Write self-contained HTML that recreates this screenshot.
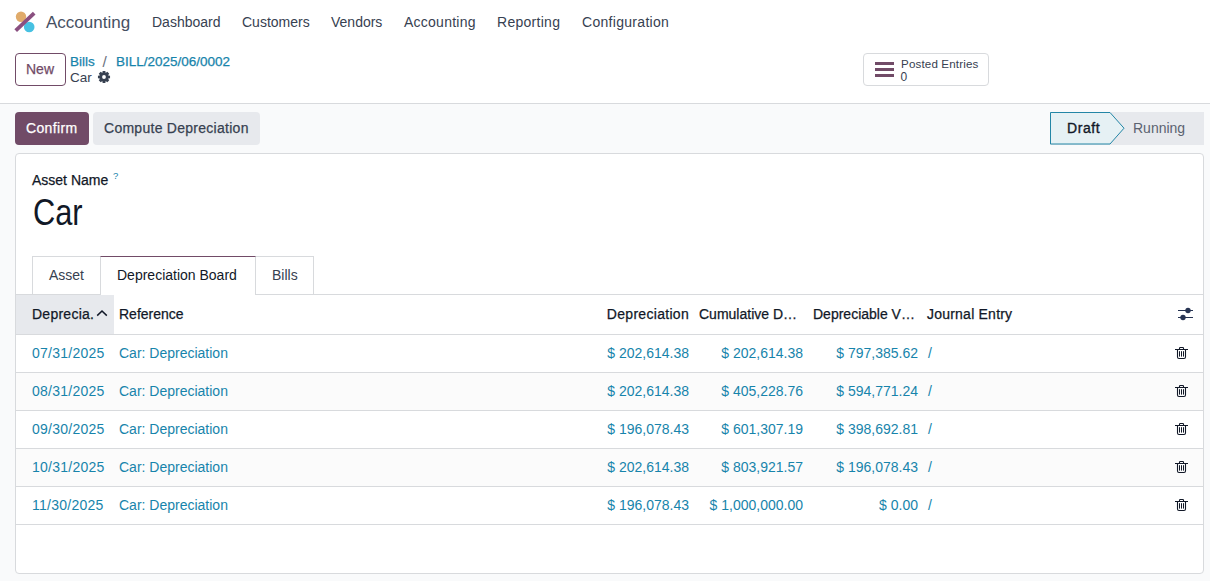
<!DOCTYPE html>
<html><head><meta charset="utf-8">
<style>
*{box-sizing:border-box;margin:0;padding:0}
html,body{width:1210px;height:581px;overflow:hidden;background:#fff;font-family:"Liberation Sans",sans-serif;color:#374151;font-size:14px}
.a{position:absolute;white-space:nowrap;line-height:1}
.r{text-align:right}
.lnk{color:#1784ab}
.md{-webkit-text-stroke:0.25px currentColor}
.dk{color:#111827}
#cp{position:absolute;left:0;top:0;width:1210px;height:104px;background:#fff;border-bottom:1px solid #d8dadd}
#bg{position:absolute;left:0;top:104px;width:1210px;height:477px;background:#f9fafb}
.bx{position:absolute}
.btn{position:absolute;border-radius:4px}
#sheet{position:absolute;left:15px;top:153px;width:1189px;height:421px;background:#fff;border:1px solid #d8dadd;border-radius:4px}
.tab{position:absolute;top:256px;height:39px;border:1px solid #d8dadd;border-bottom:none;background:#fff}
.hl{position:absolute;height:1px;background:#d8dadd}
.row{position:absolute;left:16px;width:1187px;height:38px;border-bottom:1px solid #d8dadd}
.odd{background:#fbfbfb}
</style></head><body>
<div id="cp"></div>
<div id="bg"></div>

<!-- navbar -->
<svg class="a" style="left:13px;top:10px" width="24" height="24" viewBox="0 0 24 24">
  <circle cx="8" cy="6.8" r="5.2" fill="#e0ab6b"/>
  <circle cx="16.2" cy="17" r="5.3" fill="#47c1e2"/>
  <line x1="2.7" y1="20.7" x2="21.2" y2="3.1" stroke="#8a4f80" stroke-width="3.8"/>
</svg>
<div class="a m" style="left:46px;top:14px;font-size:17px;color:#465063">Accounting</div>
<div class="a m" style="left:152px;top:15px">Dashboard</div>
<div class="a m" style="left:242px;top:15px">Customers</div>
<div class="a m" style="left:331px;top:15px">Vendors</div>
<div class="a m" style="left:404px;top:15px;letter-spacing:0.25px">Accounting</div>
<div class="a m" style="left:497px;top:15px;letter-spacing:0.28px">Reporting</div>
<div class="a m" style="left:582px;top:15px;letter-spacing:0.3px">Configuration</div>

<!-- control panel -->
<div class="btn" style="left:15px;top:53px;width:51px;height:33px;border:1px solid #714b67"></div>
<div class="a m md" style="left:26px;top:62px;color:#714b67">New</div>
<div class="a m lnk md" style="left:70px;top:55px;font-size:13.5px">Bills</div>
<div class="a m" style="left:102.5px;top:54px;color:#6b7280;font-size:15.5px">/</div>
<div class="a m lnk md" style="left:116px;top:55px;font-size:13.5px">BILL/2025/06/0002</div>
<div class="a m" style="left:70px;top:71px;font-size:13.5px">Car</div>
<svg class="a" style="left:97px;top:70px" width="14" height="14" viewBox="-7 -7 14 14">
  <path fill="#374151" fill-rule="evenodd" d="M4.32,-1.58 L6.05,-1.35 L6.05,1.35 L4.32,1.58 L4.17,1.94 L5.24,3.32 L3.32,5.24 L1.94,4.17 L1.58,4.32 L1.35,6.05 L-1.35,6.05 L-1.58,4.32 L-1.94,4.17 L-3.32,5.24 L-5.24,3.32 L-4.17,1.94 L-4.32,1.58 L-6.05,1.35 L-6.05,-1.35 L-4.32,-1.58 L-4.17,-1.94 L-5.24,-3.32 L-3.32,-5.24 L-1.94,-4.17 L-1.58,-4.32 L-1.35,-6.05 L1.35,-6.05 L1.58,-4.32 L1.94,-4.17 L3.32,-5.24 L5.24,-3.32 L4.17,-1.94Z M1.9,0 A1.9,1.9 0 1 0 -1.9,0 A1.9,1.9 0 1 0 1.9,0Z"/>
</svg>

<!-- posted entries -->
<div class="btn" style="left:863px;top:53px;width:126px;height:33px;border:1px solid #d8dadd"></div>
<div class="bx" style="left:875px;top:62px;width:19px;height:3px;background:#714b67"></div>
<div class="bx" style="left:875px;top:68px;width:19px;height:3px;background:#714b67"></div>
<div class="bx" style="left:875px;top:74px;width:19px;height:3px;background:#714b67"></div>
<div class="a m" style="left:901px;top:58px;font-size:11.6px;letter-spacing:0.15px">Posted Entries</div>
<div class="a m" style="left:900.5px;top:71px;font-size:12px;color:#374151">0</div>

<!-- action buttons -->
<div class="btn" style="left:15px;top:112px;width:74px;height:33px;background:#714b67"></div>
<div class="a m md" style="left:26px;top:121px;color:#fff;letter-spacing:0.35px">Confirm</div>
<div class="btn" style="left:93px;top:112px;width:167px;height:33px;background:#e7e9ed"></div>
<div class="a m md" style="left:104px;top:121px;letter-spacing:0.27px">Compute Depreciation</div>

<!-- status bar -->
<div class="bx" style="left:1050px;top:112px;width:154px;height:33px;background:#e7e9ed"></div>
<svg class="a" style="left:1049px;top:112px" width="80" height="33" viewBox="0 0 80 33">
  <path d="M1.5,0.5 L61,0.5 L75,16.2 L61,32 L1.5,32 Z" fill="#e6f1f4" stroke="#2386a6" stroke-width="1"/>
</svg>
<div class="a m dk" style="left:1067px;top:121px;-webkit-text-stroke:0.35px #111827;letter-spacing:0.6px">Draft</div>
<div class="a m" style="left:1133px;top:121px;color:#5b6270">Running</div>

<!-- sheet -->
<div id="sheet"></div>
<div class="a m md dk" style="left:32px;top:173px">Asset Name</div>
<div class="a lnk" style="left:113px;top:171px;font-size:9.5px">?</div>
<div class="a m dk" style="left:33px;top:195px;font-size:36px;transform:scaleX(0.855);transform-origin:0 0">Car</div>

<!-- tabs -->
<div class="hl" style="left:16px;top:294px;width:1187px"></div>
<div class="tab" style="left:32px;width:69px;height:38px"></div>
<div class="tab" style="left:255px;width:59px;height:38px"></div>
<div class="tab" style="left:100px;width:156px;border-top:1px solid #714b67;height:40px"></div>
<div class="a m" style="left:49px;top:268px">Asset</div>
<div class="a m dk" style="left:117px;top:268px">Depreciation Board</div>
<div class="a m" style="left:272px;top:268px">Bills</div>

<!-- table header -->
<div class="bx" style="left:16px;top:295px;width:1187px;height:40px;border-bottom:1px solid #d8dadd;background:#fff"></div>
<div class="bx" style="left:16px;top:295px;width:98px;height:39px;background:#e7e9ed"></div>
<div class="a m md dk" style="left:32px;top:307px;letter-spacing:0.25px">Deprecia.</div>
<svg class="a" style="left:96px;top:308px" width="12" height="10" viewBox="0 0 12 10"><path d="M1.2,7.6 L6,3 L10.8,7.6" fill="none" stroke="#111827" stroke-width="1.5"/></svg>
<div class="a m md dk" style="left:119px;top:307px">Reference</div>
<div class="a m md dk r" style="left:589px;width:100px;top:307px;letter-spacing:0.3px">Depreciation</div>
<div class="a m md dk" style="left:699px;top:307px">Cumulative D…</div>
<div class="a m md dk" style="left:813px;top:307px">Depreciable V…</div>
<div class="a m md dk" style="left:927px;top:307px;letter-spacing:0.22px">Journal Entry</div>
<svg class="a" style="left:1176px;top:306px" width="18" height="16" viewBox="0 0 18 16">
  <path d="M2,4.5 H17 M2,11.5 H17" stroke="#263352" stroke-width="1.1"/>
  <circle cx="12" cy="4.5" r="2.7" fill="#263352"/><circle cx="7" cy="11.5" r="2.7" fill="#263352"/>
</svg>

<!-- rows -->
<div class="row" style="top:335px"></div>
<div class="a m lnk" style="left:32px;top:346px;letter-spacing:0.25px">07/31/2025</div>
<div class="a m lnk" style="left:119px;top:346px">Car: Depreciation</div>
<div class="a m lnk r" style="left:489px;width:200px;top:346px">$ 202,614.38</div>
<div class="a m lnk r" style="left:603px;width:200px;top:346px">$ 202,614.38</div>
<div class="a m lnk r" style="left:718px;width:200px;top:346px">$ 797,385.62</div>
<div class="a m lnk" style="left:928px;top:346px">/</div>
<svg class="a" style="left:1172px;top:344px" width="18" height="18" viewBox="0 0 18 18"><path d="M3,5.5 H16 M7.5,5 V4.2 Q7.5,3.5 8.2,3.5 H10.8 Q11.5,3.5 11.5,4.2 V5 M5.5,6 V13 Q5.5,14.5 7,14.5 H12 Q13.5,14.5 13.5,13 V6" fill="none" stroke="#111827" stroke-width="1.1"/><path d="M7.5,7.2 V12.6 M9.5,7.2 V12.6 M11.5,7.2 V12.6" stroke="#111827" stroke-width="1"/></svg>
<div class="row odd" style="top:373px"></div>
<div class="a m lnk" style="left:32px;top:384px;letter-spacing:0.25px">08/31/2025</div>
<div class="a m lnk" style="left:119px;top:384px">Car: Depreciation</div>
<div class="a m lnk r" style="left:489px;width:200px;top:384px">$ 202,614.38</div>
<div class="a m lnk r" style="left:603px;width:200px;top:384px">$ 405,228.76</div>
<div class="a m lnk r" style="left:718px;width:200px;top:384px">$ 594,771.24</div>
<div class="a m lnk" style="left:928px;top:384px">/</div>
<svg class="a" style="left:1172px;top:382px" width="18" height="18" viewBox="0 0 18 18"><path d="M3,5.5 H16 M7.5,5 V4.2 Q7.5,3.5 8.2,3.5 H10.8 Q11.5,3.5 11.5,4.2 V5 M5.5,6 V13 Q5.5,14.5 7,14.5 H12 Q13.5,14.5 13.5,13 V6" fill="none" stroke="#111827" stroke-width="1.1"/><path d="M7.5,7.2 V12.6 M9.5,7.2 V12.6 M11.5,7.2 V12.6" stroke="#111827" stroke-width="1"/></svg>
<div class="row" style="top:411px"></div>
<div class="a m lnk" style="left:32px;top:422px;letter-spacing:0.25px">09/30/2025</div>
<div class="a m lnk" style="left:119px;top:422px">Car: Depreciation</div>
<div class="a m lnk r" style="left:489px;width:200px;top:422px">$ 196,078.43</div>
<div class="a m lnk r" style="left:603px;width:200px;top:422px">$ 601,307.19</div>
<div class="a m lnk r" style="left:718px;width:200px;top:422px">$ 398,692.81</div>
<div class="a m lnk" style="left:928px;top:422px">/</div>
<svg class="a" style="left:1172px;top:420px" width="18" height="18" viewBox="0 0 18 18"><path d="M3,5.5 H16 M7.5,5 V4.2 Q7.5,3.5 8.2,3.5 H10.8 Q11.5,3.5 11.5,4.2 V5 M5.5,6 V13 Q5.5,14.5 7,14.5 H12 Q13.5,14.5 13.5,13 V6" fill="none" stroke="#111827" stroke-width="1.1"/><path d="M7.5,7.2 V12.6 M9.5,7.2 V12.6 M11.5,7.2 V12.6" stroke="#111827" stroke-width="1"/></svg>
<div class="row odd" style="top:449px"></div>
<div class="a m lnk" style="left:32px;top:460px;letter-spacing:0.25px">10/31/2025</div>
<div class="a m lnk" style="left:119px;top:460px">Car: Depreciation</div>
<div class="a m lnk r" style="left:489px;width:200px;top:460px">$ 202,614.38</div>
<div class="a m lnk r" style="left:603px;width:200px;top:460px">$ 803,921.57</div>
<div class="a m lnk r" style="left:718px;width:200px;top:460px">$ 196,078.43</div>
<div class="a m lnk" style="left:928px;top:460px">/</div>
<svg class="a" style="left:1172px;top:458px" width="18" height="18" viewBox="0 0 18 18"><path d="M3,5.5 H16 M7.5,5 V4.2 Q7.5,3.5 8.2,3.5 H10.8 Q11.5,3.5 11.5,4.2 V5 M5.5,6 V13 Q5.5,14.5 7,14.5 H12 Q13.5,14.5 13.5,13 V6" fill="none" stroke="#111827" stroke-width="1.1"/><path d="M7.5,7.2 V12.6 M9.5,7.2 V12.6 M11.5,7.2 V12.6" stroke="#111827" stroke-width="1"/></svg>
<div class="row" style="top:487px"></div>
<div class="a m lnk" style="left:32px;top:498px;letter-spacing:0.25px">11/30/2025</div>
<div class="a m lnk" style="left:119px;top:498px">Car: Depreciation</div>
<div class="a m lnk r" style="left:489px;width:200px;top:498px">$ 196,078.43</div>
<div class="a m lnk r" style="left:603px;width:200px;top:498px">$ 1,000,000.00</div>
<div class="a m lnk r" style="left:718px;width:200px;top:498px">$ 0.00</div>
<div class="a m lnk" style="left:928px;top:498px">/</div>
<svg class="a" style="left:1172px;top:496px" width="18" height="18" viewBox="0 0 18 18"><path d="M3,5.5 H16 M7.5,5 V4.2 Q7.5,3.5 8.2,3.5 H10.8 Q11.5,3.5 11.5,4.2 V5 M5.5,6 V13 Q5.5,14.5 7,14.5 H12 Q13.5,14.5 13.5,13 V6" fill="none" stroke="#111827" stroke-width="1.1"/><path d="M7.5,7.2 V12.6 M9.5,7.2 V12.6 M11.5,7.2 V12.6" stroke="#111827" stroke-width="1"/></svg>

</body></html>
